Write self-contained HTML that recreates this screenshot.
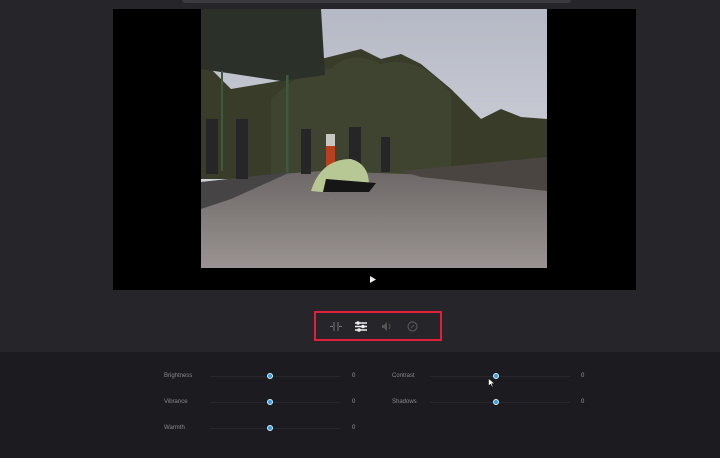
<!DOCTYPE html>
<html><head><style>
body{margin:0;width:720px;height:458px;background:#262529;position:relative;overflow:hidden;font-family:"Liberation Sans",sans-serif}
.topbar{position:absolute;left:182px;top:0;width:389px;height:3px;background:#3b3a3f;border-radius:0 0 3px 3px}
.video{position:absolute;left:113px;top:9px;width:523px;height:281px;background:#000}
.panel{position:absolute;left:0;top:352px;width:720px;height:106px;background:#1c1b1f}
.tools{position:absolute;left:314px;top:311px;width:128px;height:30px;border:2px solid #e0203a;box-sizing:border-box}
.lbl{position:absolute;font-size:6px;color:#8a8a8e}
.track{position:absolute;height:1px;background:#27262b}
.knob{position:absolute;width:4px;height:4px;border-radius:50%;background:#3aa0e0;border:1px solid #d8ecf8}
.val{position:absolute;font-size:6px;color:#9a9a9e}
</style></head><body>
<div class="topbar"></div>
<div class="video">
<svg style="position:absolute;left:88px;top:0" width="346" height="259" viewBox="0 0 346 259">
<defs><linearGradient id="sky" x1="0" y1="0" x2="0" y2="1"><stop offset="0" stop-color="#b5b9c5"/><stop offset="1" stop-color="#dddee3"/></linearGradient>
<linearGradient id="fl" x1="0" y1="0" x2="0" y2="1"><stop offset="0" stop-color="#6d6867"/><stop offset="1" stop-color="#9a9392"/></linearGradient></defs>
<rect width="346" height="259" fill="url(#sky)"/>
<path d="M0 50 L30 80 L60 75 L90 70 L120 50 L160 40 L180 50 L200 45 L220 55 L250 80 L280 110 L300 100 L320 108 L346 110 L346 170 L0 170Z" fill="#383c28"/>
<path d="M70 90 Q100 60 130 60 Q150 40 180 55 Q220 45 250 85 L250 165 L70 165Z" fill="#3f4430"/>
<path d="M0 0 L120 0 L124 66 L80 72 L0 60Z" fill="#2b3029"/>
<rect x="85" y="66" width="2.5" height="100" fill="#3e5a3d"/>
<rect x="20" y="62" width="2" height="100" fill="#3e5a3d"/>
<path d="M0 173 L80 165 L120 162 L346 170 L346 259 L0 259Z" fill="url(#fl)"/>
<path d="M0 173 L90 163 L30 190 L0 200Z" fill="#464445"/>
<path d="M200 162 L346 148 L346 182 L220 168Z" fill="#4b4542"/>
<g fill="#262628"><rect x="5" y="110" width="12" height="55"/><rect x="35" y="110" width="12" height="60"/><rect x="100" y="120" width="10" height="45"/><rect x="148" y="118" width="12" height="40"/><rect x="180" y="128" width="9" height="35"/></g>
<rect x="125" y="125" width="9" height="33" fill="#b8401f"/>
<rect x="125" y="125" width="9" height="12" fill="#c8c6c0"/>
<path d="M110 182 Q120 150 150 150 Q168 155 168 176 Q140 186 110 182Z" fill="#b8c894"/>
<path d="M125 170 L175 174 L168 183 L122 183Z" fill="#161616"/>
</svg>
<svg style="position:absolute;left:256px;top:266px" width="8" height="9"><path d="M1 1 L7 4.5 L1 8Z" fill="#eee"/></svg>
</div>
<div class="panel"></div>
<div class="tools">
<svg style="position:absolute;left:13px;top:8px" width="14" height="11" stroke="#777" fill="none" stroke-width="1"><path d="M5 1V10M9 1V10M1 5.5H4M10 5.5H13"/></svg>
<svg style="position:absolute;left:38px;top:8px" width="14" height="11" stroke="#eee" fill="none" stroke-width="1.5"><path d="M1 2H13M1 5.5H13M1 9H13"/><circle cx="4" cy="2" r="1" fill="#eee"/><circle cx="9" cy="5.5" r="1" fill="#eee"/><circle cx="5" cy="9" r="1" fill="#eee"/></svg>
<svg style="position:absolute;left:65px;top:8px" width="12" height="11" fill="#555"><path d="M1 4H3L6 1V10L3 7H1Z"/><path d="M8 3Q10 5.5 8 8" stroke="#555" fill="none"/></svg>
<svg style="position:absolute;left:91px;top:8px" width="11" height="11"><circle cx="5.5" cy="5.5" r="4.5" fill="none" stroke="#555" stroke-width="1.2"/><path d="M4 7L7 4" stroke="#555"/></svg>
</div>
<div class="lbl" style="left:164px;top:373px">Brightness</div>
<div class="track" style="left:210px;top:376px;width:130px"></div>
<div class="knob" style="left:267px;top:373px"></div>
<div class="val" style="left:352px;top:373px">0</div>
<div class="lbl" style="left:164px;top:399px">Vibrance</div>
<div class="track" style="left:210px;top:402px;width:130px"></div>
<div class="knob" style="left:267px;top:399px"></div>
<div class="val" style="left:352px;top:399px">0</div>
<div class="lbl" style="left:164px;top:425px">Warmth</div>
<div class="track" style="left:210px;top:428px;width:130px"></div>
<div class="knob" style="left:267px;top:425px"></div>
<div class="val" style="left:352px;top:425px">0</div>
<div class="lbl" style="left:392px;top:373px">Contrast</div>
<div class="track" style="left:430px;top:376px;width:140px"></div>
<div class="knob" style="left:493px;top:373px"></div>
<div class="val" style="left:581px;top:373px">0</div>
<div class="lbl" style="left:392px;top:399px">Shadows</div>
<div class="track" style="left:430px;top:402px;width:140px"></div>
<div class="knob" style="left:493px;top:399px"></div>
<div class="val" style="left:581px;top:399px">0</div>
<svg style="position:absolute;left:488px;top:378px" width="7" height="10"><path d="M0.5 0.5V8L2.5 6L4 9L5 8.5L3.7 5.6H6.5Z" fill="#fff" stroke="#000" stroke-width="0.5"/></svg>
</body></html>
